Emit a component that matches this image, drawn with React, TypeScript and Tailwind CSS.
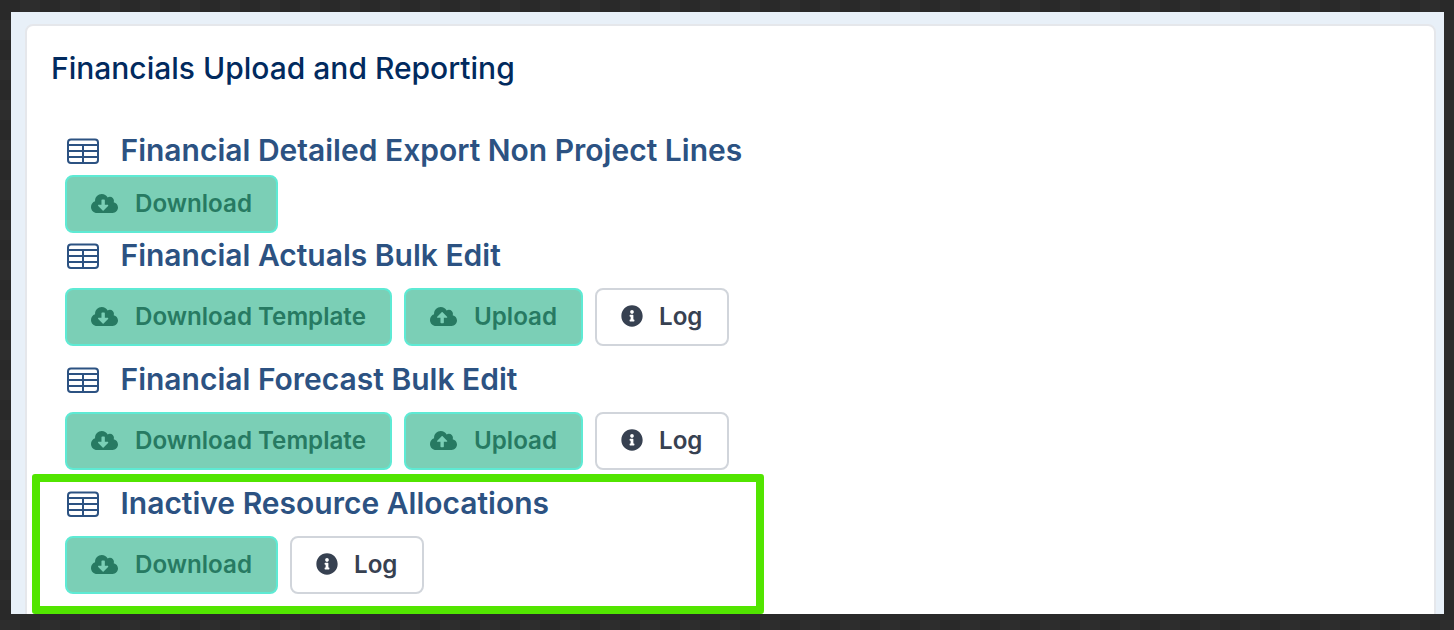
import { FaCloudDownloadAlt, FaCloudUploadAlt, FaInfoCircle } from "react-icons/fa"

function TableIcon() {
  return (
    <svg width="32" height="26" viewBox="0 0 32 26" fill="none" stroke="#2c5282" strokeWidth="2" className="shrink-0">
      <rect x="1" y="1.5" width="30" height="23.5" rx="3" />
      <path d="M1 7h30M1 13h30M1 19h30M16 7v18" />
    </svg>
  )
}

function GreenButton({ label, upload, width }: { label: string; upload?: boolean; width: string }) {
  const Icon = upload ? FaCloudUploadAlt : FaCloudDownloadAlt
  return (
    <button className={`flex h-[58px] items-center rounded-lg border-2 border-[#5eead4] bg-[#7bcfb6] pl-6 text-[24.15px] font-semibold text-[#277a62] ${width}`}>
      <Icon className="mr-[17px] size-[27px] shrink-0 -translate-y-px" />
      {label}
    </button>
  )
}

function LogButton() {
  return (
    <button className="flex h-[58px] w-[134px] items-center rounded-lg border-2 border-[#d1d5db] bg-white pl-6 text-[24.15px] font-semibold text-[#374151]">
      <FaInfoCircle className="mr-[16px] size-[22px] shrink-0 -translate-y-px" />
      Log
    </button>
  )
}

function Heading({ children }: { children: string }) {
  return (
    <div className="flex h-10 items-center">
      <div className="ml-[2px] mr-[21.5px] flex">
        <TableIcon />
      </div>
      <h3 className="pb-[2px] text-[30px] font-semibold text-[#2c5282]">{children}</h3>
    </div>
  )
}

export default function App() {
  return (
    <div className="relative h-[630px] w-[1454px] overflow-hidden bg-[#2b2b2b] bg-[conic-gradient(#2d2d2d_25%,#292929_0_50%,#2d2d2d_0_75%,#292929_0)] bg-[length:40px_40px] pb-4 pl-[11px] pr-[10px] pt-3 font-['Inter',sans-serif]">
      <div className="h-full overflow-hidden bg-[#e8f0f8] pl-[14px] pr-[8px] pt-[12px]">
        <div className="h-[640px] rounded-lg border-2 border-[#e5e7eb] bg-white pl-[24px] pt-[22px]">
          <h2 className="text-[30px] font-medium leading-[40px] text-[#012a5e]">Financials Upload and Reporting</h2>
          <div className="mt-[43px] pl-[14px]">
            <Heading>Financial Detailed Export Non Project Lines</Heading>
            <div className="mt-[4px] flex gap-[12px]">
              <GreenButton label="Download" width="w-[213px]" />
            </div>
            <div className="mt-[3px]">
              <Heading>Financial Actuals Bulk Edit</Heading>
            </div>
            <div className="mt-[12px] flex gap-[12px]">
              <GreenButton label="Download Template" width="w-[327px]" />
              <GreenButton label="Upload" upload width="w-[179px]" />
              <LogButton />
            </div>
            <div className="mt-[14px]">
              <Heading>Financial Forecast Bulk Edit</Heading>
            </div>
            <div className="mt-[12px] flex gap-[12px]">
              <GreenButton label="Download Template" width="w-[327px]" />
              <GreenButton label="Upload" upload width="w-[179px]" />
              <LogButton />
            </div>
            <div className="mt-[14px]">
              <Heading>Inactive Resource Allocations</Heading>
            </div>
            <div className="mt-[12px] flex gap-[12px]">
              <GreenButton label="Download" width="w-[213px]" />
              <LogButton />
            </div>
          </div>
        </div>
      </div>
      {/* annotation box */}
      <div className="absolute left-[32px] top-[474px] h-[140px] w-[732px] rounded-[3px] border-8 border-[#52e500]" />
    </div>
  )
}
